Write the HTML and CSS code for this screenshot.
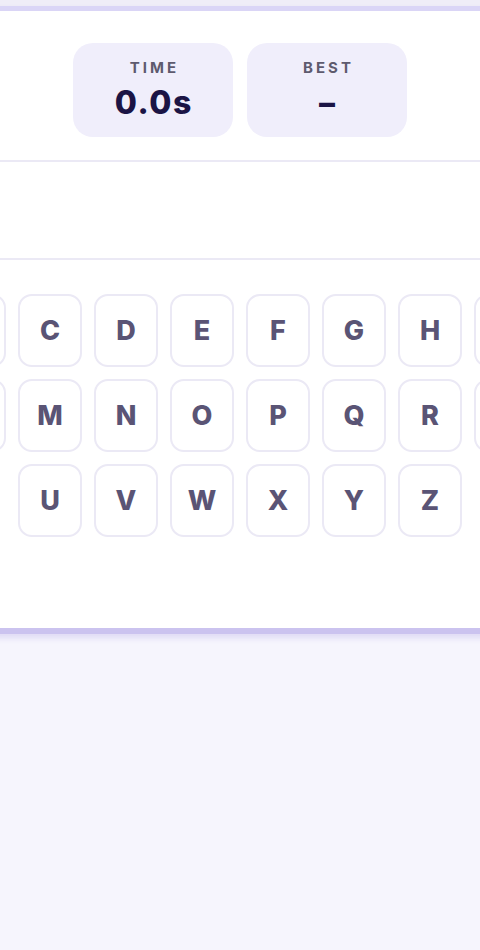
FILE: index.html
```html
<!DOCTYPE html>
<html lang="en">
<head>
<meta charset="utf-8">
<title>Alphabet Speed</title>
<link rel="stylesheet" href="styles.css">
</head>
<body>
<div class="page">
  <div class="topstrip"></div>
  <div class="stage">
    <main class="card">
      <section class="stats">
        <div class="stat">
          <div class="stat-label">TIME</div>
          <div class="stat-value">0.0s</div>
        </div>
        <div class="stat">
          <div class="stat-label">BEST</div>
          <div class="stat-value">–</div>
        </div>
      </section>
      <section class="target"></section>
      <section class="keyboard">
        <div class="keys">
          <button class="key">A</button><button class="key">B</button><button class="key">C</button><button class="key">D</button><button class="key">E</button><button class="key">F</button><button class="key">G</button><button class="key">H</button><button class="key">I</button><button class="key">J</button>
          <button class="key">K</button><button class="key">L</button><button class="key">M</button><button class="key">N</button><button class="key">O</button><button class="key">P</button><button class="key">Q</button><button class="key">R</button><button class="key">S</button><button class="key">T</button>
          <button class="key">U</button><button class="key">V</button><button class="key">W</button><button class="key">X</button><button class="key">Y</button><button class="key">Z</button>
        </div>
      </section>
    </main>
  </div>
</div>
</body>
</html>
```
FILE: styles.css
```css
html, body {
  margin: 0;
  padding: 0;
}
body {
  background: #f6f5fd;
  font-family: Inter, "Noto Sans", "DejaVu Sans", sans-serif;
  overflow: hidden;
  width: 480px;
  height: 950px;
}
.page {
  width: 480px;
}
.topstrip {
  height: 6px;
  background: #efedf7;
}
.stage {
  display: flex;
  justify-content: center;
}
.card {
  flex: 0 0 900px;
  width: 900px;
  background: #ffffff;
  border-top: 5px solid #dad5f6;
  border-bottom: 6px solid #cbc3ef;
  box-shadow: 0 4px 6px rgba(180, 170, 230, 0.35);
  display: flex;
  flex-direction: column;
}
.stats {
  display: flex;
  justify-content: center;
  gap: 14px;
  padding: 32px 0 23px;
  border-bottom: 2px solid #ebe9f5;
}
.stat {
  width: 160px;
  height: 94px;
  box-sizing: border-box;
  background: #f0eefb;
  border-radius: 20px;
  display: flex;
  flex-direction: column;
  align-items: center;
  padding-top: 15px;
}
.stat-label {
  font-size: 15px;
  font-weight: 700;
  letter-spacing: 3px;
  padding-left: 3px;
  color: #5e5a6e;
  line-height: 20px;
}
.stat-value {
  font-size: 32px;
  font-weight: 800;
  letter-spacing: 1.5px;
  padding-left: 1.5px;
  color: #1b1445;
  line-height: 40px;
  margin-top: 5px;
}
.target {
  height: 96px;
  border-bottom: 2px solid #ebe9f5;
}
.keyboard {
  padding: 34px 0 91px;
  display: flex;
  justify-content: center;
}
.keys {
  width: 748px;
  flex: 0 0 748px;
  display: flex;
  flex-wrap: wrap;
  justify-content: center;
  gap: 12px;
}
.key {
  width: 64px;
  height: 73px;
  box-sizing: border-box;
  background: #ffffff;
  border: 2px solid #ebe9f5;
  border-radius: 14px;
  font-family: Inter, "Noto Sans", "DejaVu Sans", sans-serif;
  font-size: 27px;
  font-weight: 800;
  color: #5a5475;
  padding: 0;
  display: flex;
  align-items: center;
  justify-content: center;
}
```
